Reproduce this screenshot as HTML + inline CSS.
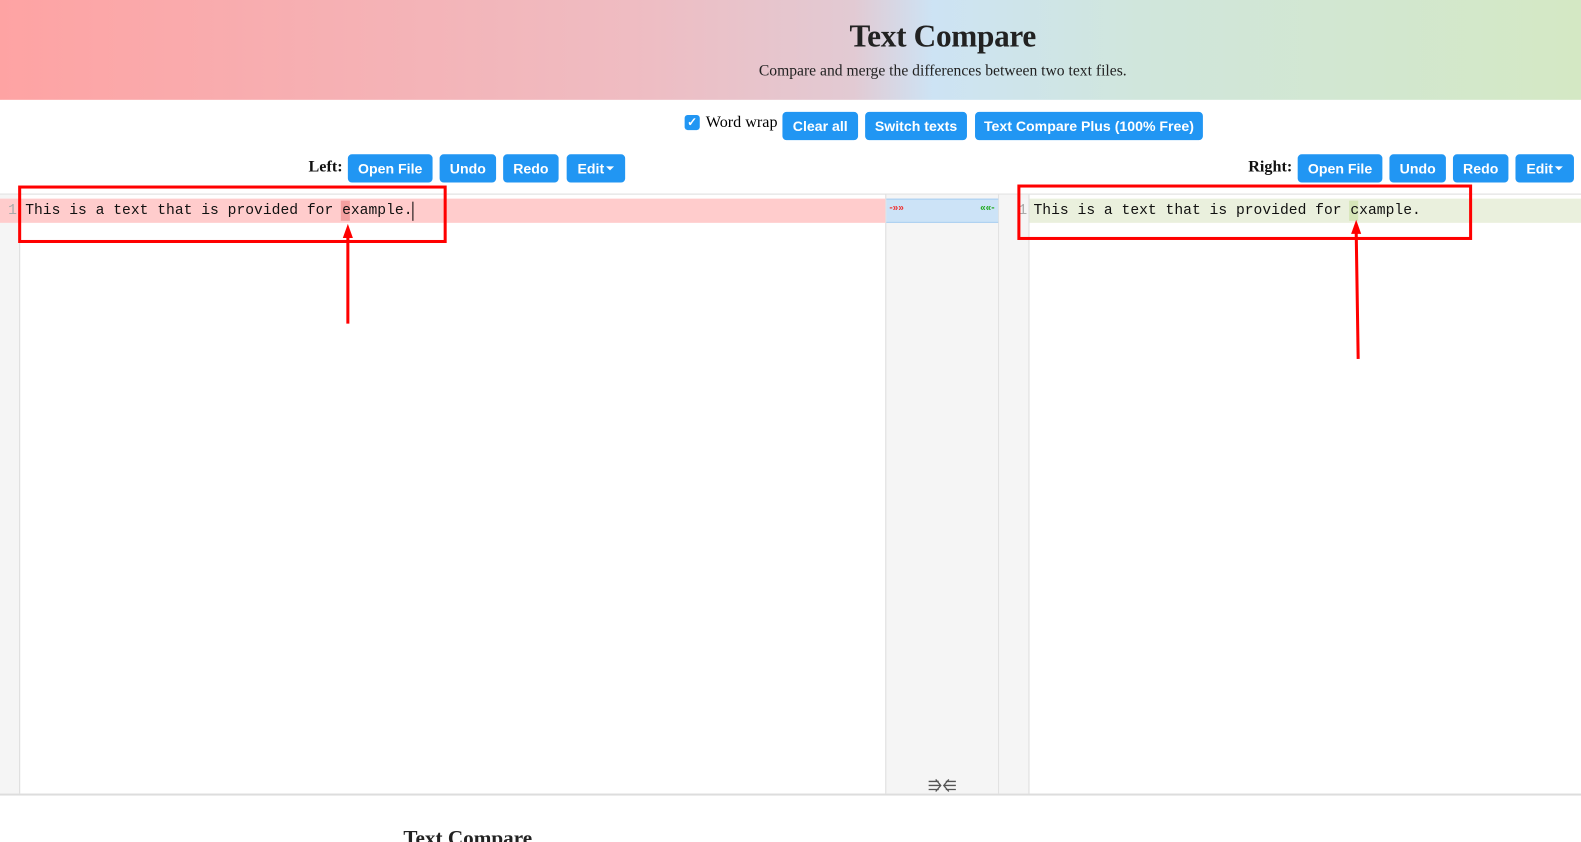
<!DOCTYPE html>
<html><head><meta charset="utf-8"><style>
*{box-sizing:border-box;margin:0;padding:0}
html,body{width:1581px;height:842px;overflow:hidden;background:#fff}
body{font-family:"Liberation Serif",serif;position:relative}
#w{position:absolute;left:0;top:0;width:1568px;height:835px;transform:scale(1.0083);transform-origin:0 0}
.hdr{position:absolute;left:0;top:0;width:1568px;height:99px;background:linear-gradient(90deg,#fea3a3 0%,#efbcc2 40%,#e2cad3 54%,#cde3f4 59%,#d0e6dc 72%,#d4e8c4 100%)}
.t{position:absolute;left:0;width:1870px;text-align:center;color:#222}
.btn{position:absolute;height:28px;background:#2196f3;color:#fff;border-radius:4px;font:bold 14px "Liberation Sans",sans-serif;line-height:28px;text-align:center}
.lbl{position:absolute;font:bold 16px "Liberation Serif",serif;color:#111}
.mono{font-family:"Liberation Mono",monospace;font-size:14.55px;color:#111;white-space:pre}
.abs{position:absolute}
.car{display:inline-block;width:0;height:0;border-left:4px solid transparent;border-right:4px solid transparent;border-top:4px solid #fff;vertical-align:3px;margin-left:2px}
</style></head><body><div id="w">
<div class="hdr"></div>
<div class="t" style="top:18px;font-size:31px;font-weight:bold;letter-spacing:-0.3px">Text Compare</div>
<div class="t" style="top:62px;font-size:15.5px">Compare and merge the differences between two text files.</div>

<div class="abs" style="left:679px;top:114px;width:15px;height:15px;background:#2196f3;border-radius:3px;color:#fff;font:bold 12px sans-serif;text-align:center;line-height:15px">✓</div>
<div class="abs" style="left:700px;top:113px;font-size:16px">Word wrap</div>
<div class="btn" style="left:776px;top:111px;width:75px">Clear all</div>
<div class="btn" style="left:858px;top:111px;width:101px">Switch texts</div>
<div class="btn" style="left:967px;top:111px;width:226px">Text Compare Plus (100% Free)</div>

<div class="lbl" style="left:306px;top:157px">Left:</div>
<div class="btn" style="left:345px;top:153px;width:84px">Open File</div>
<div class="btn" style="left:436px;top:153px;width:56px">Undo</div>
<div class="btn" style="left:499px;top:153px;width:55px">Redo</div>
<div class="btn" style="left:562px;top:153px;width:58px">Edit<span class="car"></span></div>

<div class="lbl" style="left:1238px;top:157px">Right:</div>
<div class="btn" style="left:1287px;top:153px;width:84px">Open File</div>
<div class="btn" style="left:1378px;top:153px;width:56px">Undo</div>
<div class="btn" style="left:1441px;top:153px;width:55px">Redo</div>
<div class="btn" style="left:1503px;top:153px;width:58px">Edit<span class="car"></span></div>

<div class="abs" style="left:0;top:192px;width:1568px;height:597px;border-top:1px solid #ddd;border-bottom:2px solid #ddd"></div>
<div class="abs" style="left:0;top:193px;width:20px;height:594px;background:#f5f5f5;border-right:1px solid #ddd"></div>
<div class="abs" style="left:878px;top:193px;width:113px;height:594px;background:#f5f5f5;border-left:1px solid #ddd;border-right:1px solid #ddd"></div>
<div class="abs" style="left:991px;top:193px;width:30px;height:594px;background:#f5f5f5;border-right:1px solid #ddd"></div>

<div class="abs" style="left:0;top:197px;width:878px;height:24px;background:#ffcccc"></div>
<div class="abs" style="left:879px;top:197px;width:111px;height:24px;background:#cce3f7;border-top:1px solid #a8cdf0;border-bottom:1px solid #a8cdf0"></div>
<div class="abs" style="left:1021px;top:197px;width:547px;height:24px;background:#eaf0dd"></div>
<div class="abs" style="left:338px;top:199px;width:9px;height:20px;background:#f3a0a0"></div>
<div class="abs" style="left:1338px;top:199px;width:9px;height:20px;background:#d6e6b8"></div>
<div class="abs mono" style="left:8px;top:201px;color:#aaa">1</div>
<div class="abs mono" style="left:25px;top:201px">This is a text that is provided for example.</div>
<div class="abs" style="left:409px;top:200px;width:1px;height:19px;background:#000"></div>
<div class="abs mono" style="left:1010px;top:201px;color:#aaa">1</div>
<div class="abs mono" style="left:1025px;top:201px">This is a text that is provided for cxample.</div>
<div class="abs" style="left:882px;top:201px;color:#e33;font:bold 10px sans-serif">-»»</div>
<div class="abs" style="left:972px;top:201px;color:#2a2;font:bold 10px sans-serif">««-</div>
<svg class="abs" style="left:920px;top:772px" width="30" height="14" fill="none" stroke="#555" stroke-width="1.3">
<path d="M1 3H11M1 7H13M1 11H11M8 1L13 7L8 13"/>
<path d="M28 3H18M28 7H16M28 11H18M21 1L16 7L21 13"/>
</svg>

<div class="abs" style="left:400px;top:819px;font-size:21px;font-weight:bold;color:#222">Text Compare</div>

<div class="abs" style="left:18px;top:184px;width:425px;height:57px;border:3px solid #f00"></div>
<div class="abs" style="left:1009px;top:183px;width:451px;height:55px;border:3px solid #f00"></div>
<svg class="abs" style="left:0;top:0" width="1568" height="835">
<line x1="345" y1="321" x2="345" y2="232" stroke="#f00" stroke-width="3"/>
<polygon points="345,222 340,236 350,236" fill="#f00"/>
<line x1="1347" y1="356" x2="1345" y2="228" stroke="#f00" stroke-width="3"/>
<polygon points="1345,218 1340,232 1350,232" fill="#f00"/>
</svg>
</div></body></html>
